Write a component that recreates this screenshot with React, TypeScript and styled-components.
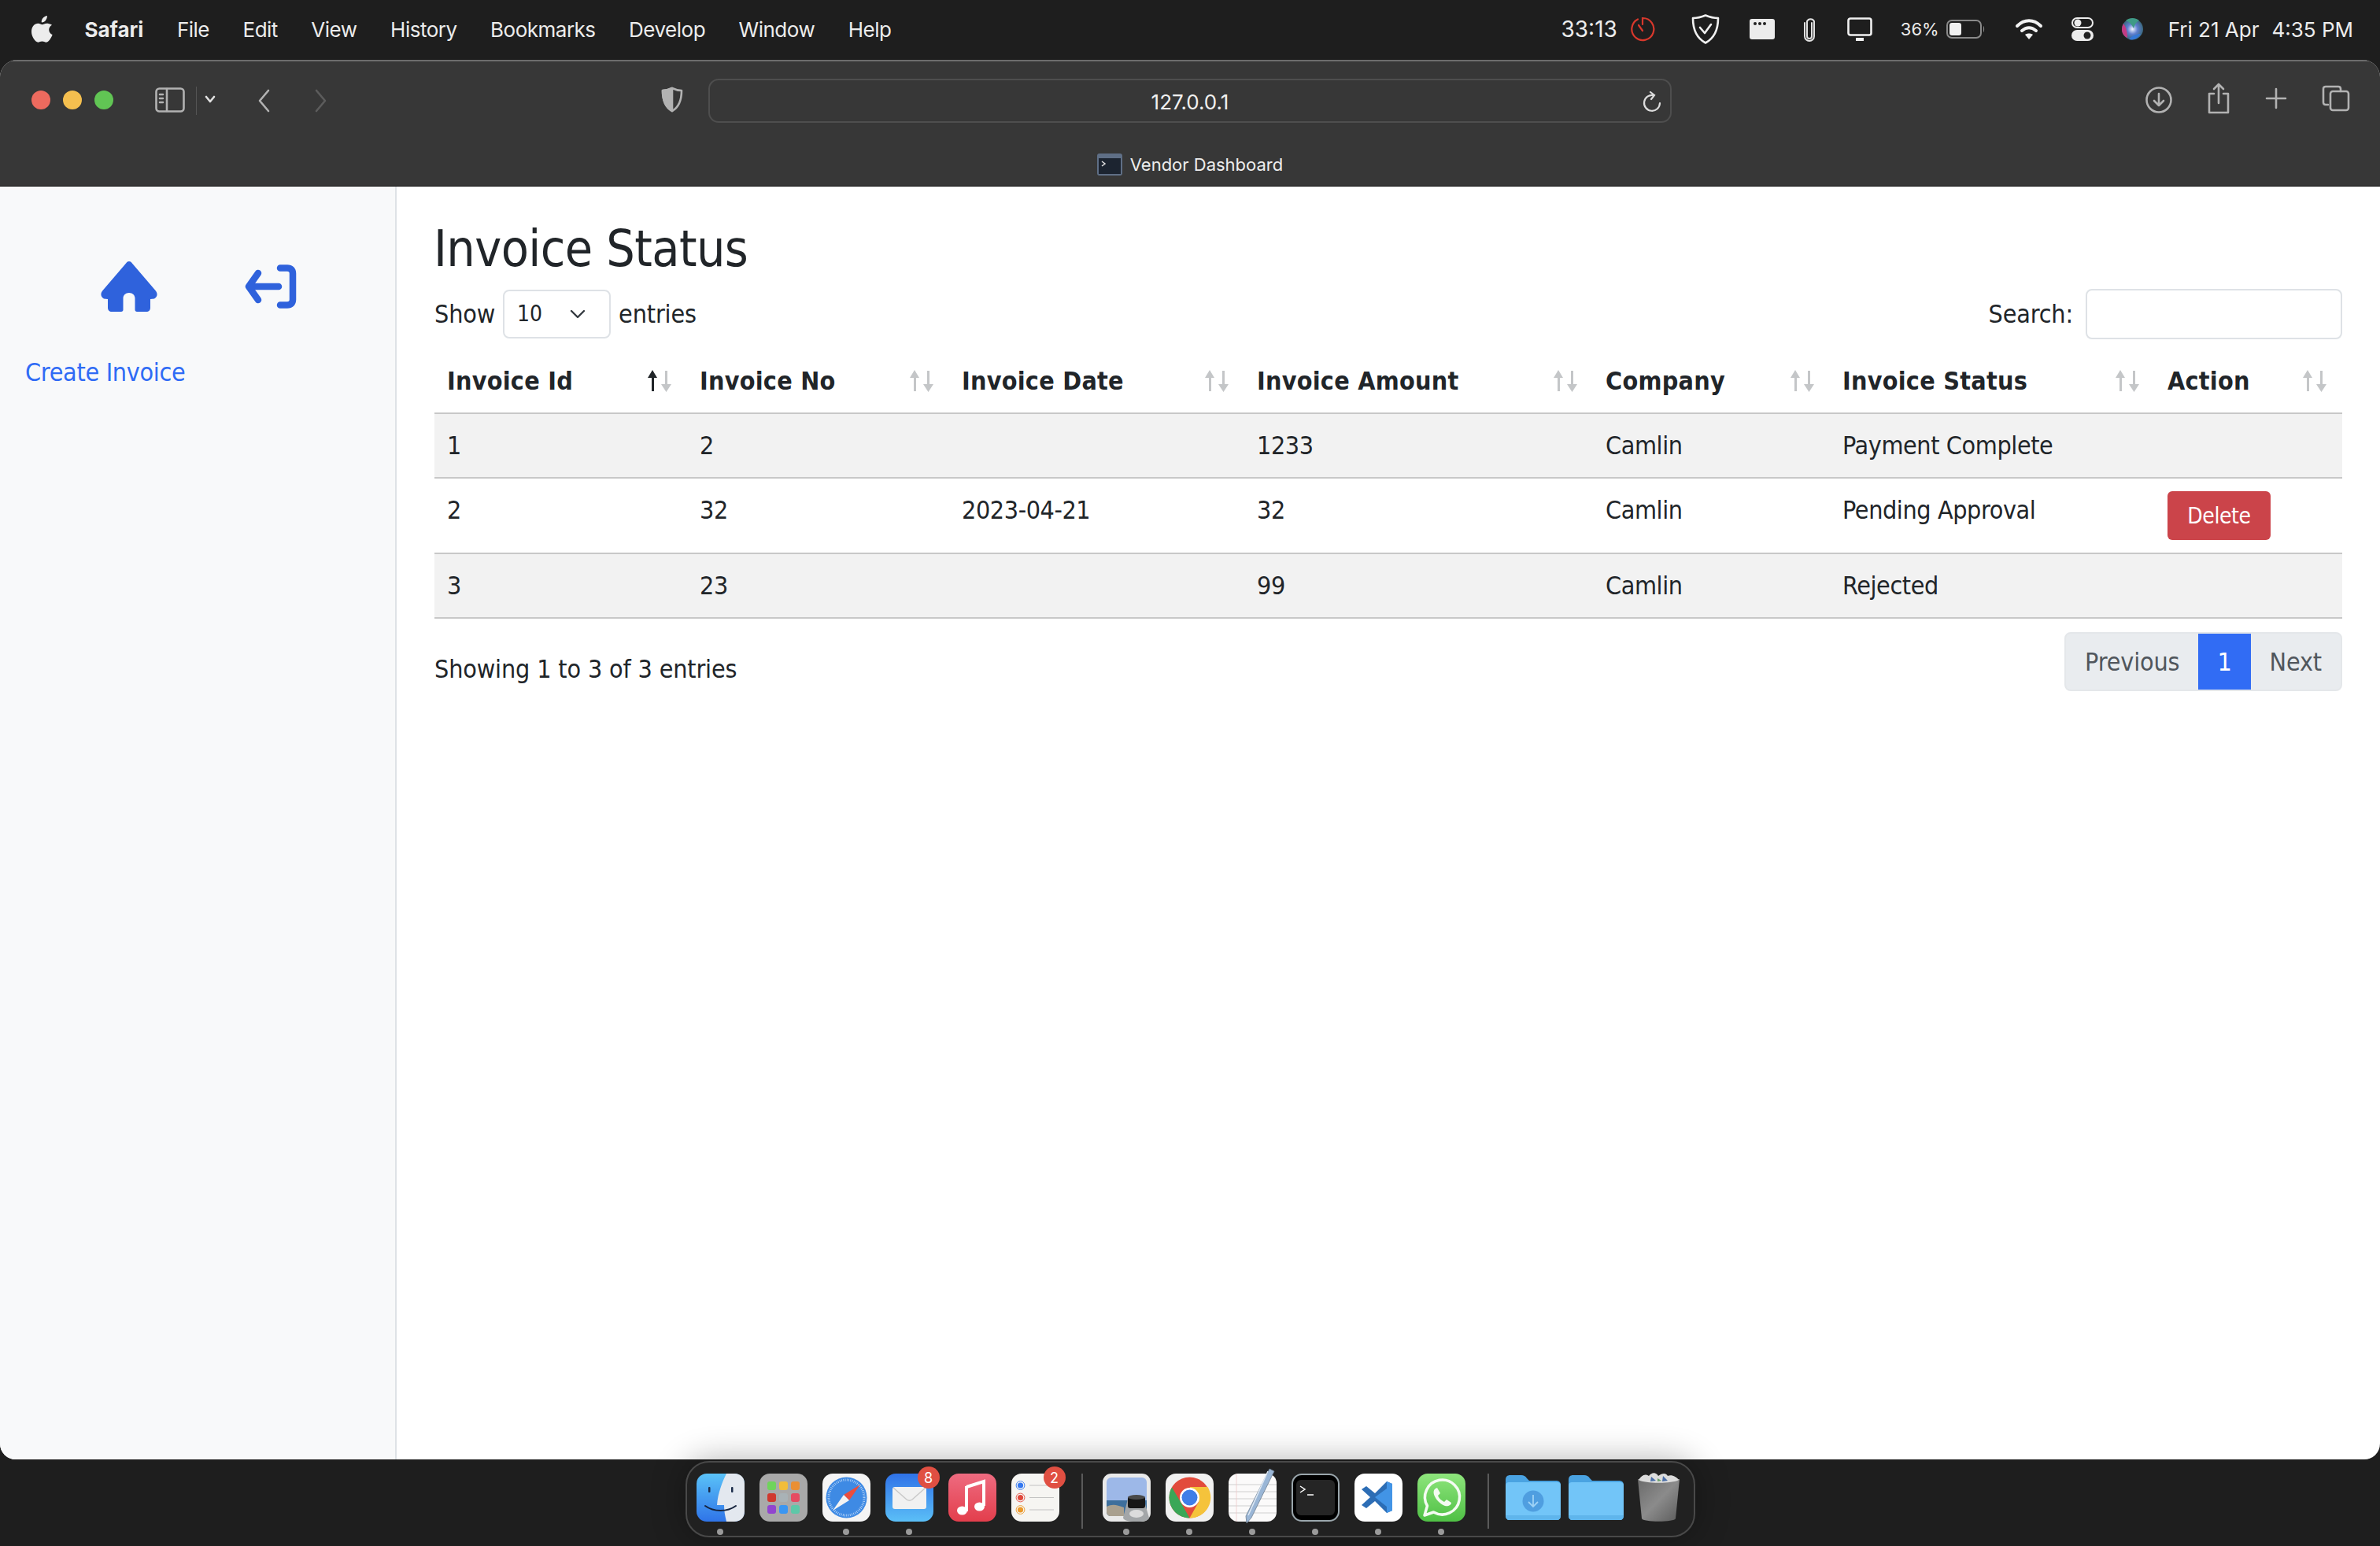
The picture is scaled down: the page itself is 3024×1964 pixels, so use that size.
import { createGlobalStyle, styled } from "styled-components";

const GlobalStyle = createGlobalStyle`
  html, body {
    margin: 0;
    padding: 0;
    background: #1e1e1e;
  }
  * {
    box-sizing: border-box;
  }
`;

const PAGE_FONT = `"DejaVu Sans Condensed", "DejaVu Sans", sans-serif`;
const MAC_FONT = `Inter, "Noto Sans", sans-serif`;

const Screen = styled.div`
  width: 3024px;
  height: 1964px;
  display: flex;
  flex-direction: column;
  background: #1e1e1e;
  overflow: hidden;
`;

const MenuBar = styled.div`
  height: 76px;
  flex: none;
  display: flex;
  align-items: center;
  justify-content: space-between;
  padding: 0 34px 2px 40px;
  color: #ececec;
  font-family: ${MAC_FONT};
  font-size: 26px;
`;

const MenuLeft = styled.div`
  display: flex;
  align-items: center;
  gap: 42.5px;
`;

const AppleLogo = styled.svg`
  width: 28px;
  height: 34px;
  margin-right: -3px;
  fill: #ececec;
`;

const MenuItem = styled.span<{ $bold?: boolean }>`
  font-weight: ${(p) => (p.$bold ? 700 : 400)};
  letter-spacing: ${(p) => (p.$bold ? "0" : "-0.5px")};
  white-space: nowrap;
`;

const Tray = styled.div`
  display: flex;
  align-items: center;
`;

const TrayItem = styled.div<{ $left?: number }>`
  margin-left: ${(p) => p.$left ?? 0}px;
  display: flex;
  align-items: center;
  white-space: nowrap;
`;

const Timer = styled.span`
  font-size: 28px;
`;

const Percent = styled.span`
  font-size: 22px;
`;

const Window = styled.div`
  height: 1778px;
  flex: none;
  display: flex;
  flex-direction: column;
  border-radius: 22px 22px 20px 20px;
  overflow: hidden;
  background: #fff;
`;

const Toolbar = styled.div`
  height: 161px;
  flex: none;
  background: #373737;
  border-top: 2px solid #6c6c6c;
  border-bottom: 1px solid #111;
  display: flex;
  flex-direction: column;
`;

const ToolRow = styled.div`
  height: 100px;
  padding-top: 22px;
  display: flex;
  align-items: flex-start;
`;

const Lights = styled.div`
  display: flex;
  gap: 16px;
  margin: 15px 0 0 40px;
`;

const Light = styled.span<{ $color: string }>`
  width: 24px;
  height: 24px;
  border-radius: 50%;
  background: ${(p) => p.$color};
`;

const ToolIcon = styled.svg<{ $left: number; $top?: number; $dim?: boolean }>`
  margin-left: ${(p) => p.$left}px;
  margin-top: ${(p) => p.$top ?? 12}px;
  flex: none;
  fill: none;
  stroke: ${(p) => (p.$dim ? "#5c5c5c" : "#b2b2b2")};
  stroke-width: 2.6;
  stroke-linecap: round;
  stroke-linejoin: round;
`;

const ToolDivider = styled.span`
  width: 1px;
  height: 36px;
  margin: 10px 0 0 14px;
  flex: none;
  background: #555;
`;

const AddressBar = styled.div`
  width: 1224px;
  height: 56px;
  margin-left: 32px;
  padding-top: 3px;
  flex: none;
  border: 2px solid #4e4e4e;
  border-radius: 13px;
  display: flex;
  align-items: center;
  justify-content: center;
  position: relative;
  color: #f0f0f0;
  font-family: ${MAC_FONT};
  font-size: 26px;
`;

const Reload = styled.svg`
  position: absolute;
  right: 11px;
  top: 14px;
  fill: none;
  stroke: #dcdcdc;
  stroke-width: 2.2;
  stroke-linecap: round;
`;

const TabRow = styled.div`
  flex: 1;
  display: flex;
  align-items: center;
  justify-content: center;
  gap: 10px;
  padding-top: 4px;
  color: #ededed;
  font-family: ${MAC_FONT};
  font-size: 22px;
`;

const Body = styled.div`
  flex: 1;
  display: flex;
  min-height: 0;
`;

const Sidebar = styled.aside`
  width: 504px;
  flex: none;
  background: #f8f9fa;
  border-right: 2px solid #dee2e6;
  padding: 95px 32px 0;
  font-family: ${PAGE_FONT};
`;

const NavIcons = styled.div`
  display: flex;
  align-items: center;
  gap: 111px;
  padding-left: 96px;
  height: 64px;
`;

const CreateLink = styled.a`
  display: block;
  margin-top: 53px;
  color: #2f6bf5;
  font-size: 32px;
  line-height: 48px;
  letter-spacing: -0.3px;
`;

const Main = styled.main`
  flex: 1;
  padding: 41px 48px 0 48px;
  color: #212529;
  font-family: ${PAGE_FONT};
  font-size: 32px;
  line-height: 48px;
  letter-spacing: -0.4px;
`;

const Title = styled.h2`
  margin: 0 0 13px -1px;
  font-size: 64px;
  font-weight: 400;
  line-height: 77px;
  letter-spacing: -0.6px;
`;

const Controls = styled.div`
  display: flex;
  align-items: flex-start;
  justify-content: space-between;
  height: 64px;
`;

const ControlLabel = styled.label`
  display: flex;
  align-items: center;
  gap: 10px;
  height: 62px;
  letter-spacing: -0.15px;
`;

const SelectBox = styled.div`
  width: 137px;
  height: 62px;
  padding: 0 30px 0 16px;
  border: 2px solid #dee2e6;
  border-radius: 8px;
  display: flex;
  align-items: center;
  justify-content: space-between;
  font-size: 28px;
`;

const SearchInput = styled.div`
  width: 326px;
  height: 64px;
  margin-left: 6px;
  border: 2px solid #dee2e6;
  border-radius: 8px;
`;

const Table = styled.table`
  width: 100%;
  margin-top: 12px;
  border-collapse: collapse;
  table-layout: fixed;
`;

const Col = styled.col<{ $w: number }>`
  width: ${(p) => p.$w}px;
`;

const HeadCell = styled.th`
  padding: 16px 20px 16px 16px;
  border-bottom: 2px solid #c8c8c8;
  font-weight: 700;
  text-align: left;
  letter-spacing: 0.25px;
`;

const HeadInner = styled.div`
  display: flex;
  align-items: center;
  justify-content: space-between;
  white-space: nowrap;
`;

const SortIcon = styled.svg`
  flex: none;
`;

const Row = styled.tr<{ $striped?: boolean }>`
  background: ${(p) => (p.$striped ? "#f2f2f2" : "#fff")};
`;

const Cell = styled.td`
  padding: 16px;
  border-bottom: 2px solid #c8c8c8;
  vertical-align: top;
`;

const DeleteButton = styled.button`
  width: 131px;
  height: 62px;
  padding: 0;
  border: 0;
  border-radius: 6px;
  background: #cb444a;
  color: #fff;
  font-family: ${PAGE_FONT};
  font-size: 28px;
  letter-spacing: -0.4px;
  display: block;
`;

const Footer = styled.div`
  display: flex;
  align-items: flex-start;
  justify-content: space-between;
  margin-top: 17px;
`;

const FooterInfo = styled.div`
  padding-top: 23px;
  letter-spacing: -0.15px;
`;

const Pager = styled.div`
  display: flex;
  height: 75px;
  border-radius: 8px;
  overflow: hidden;
  background: #e9ecef;
  border: 2px solid #e4e7ea;
  color: #50565c;
  letter-spacing: -0.15px;
`;

const PageLink = styled.span<{ $active?: boolean }>`
  display: flex;
  align-items: center;
  padding: 0 24px;
  margin: ${(p) => (p.$active ? "-2px 0" : "0")};
  background: ${(p) => (p.$active ? "#316cf4" : "transparent")};
  color: ${(p) => (p.$active ? "#fff" : "inherit")};
`;

const DockRow = styled.div`
  flex: 1;
  display: flex;
  justify-content: center;
  align-items: flex-start;
  padding-top: 2px;
`;

const Dock = styled.div`
  height: 97px;
  padding: 14px 17px 0 12px;
  display: flex;
  align-items: flex-start;
  background: #212121;
  border: 2px solid #494949;
  border-radius: 30px;
  box-shadow: 0 0 44px rgba(0, 0, 0, 0.32);
  position: relative;
`;

const DockGroup = styled.div<{ $gap: number }>`
  display: flex;
  gap: ${(p) => p.$gap}px;
`;

const DockSlot = styled.div<{ $w?: number; $left?: number }>`
  width: ${(p) => p.$w ?? 61}px;
  margin-left: ${(p) => p.$left ?? 0}px;
  display: flex;
  flex-direction: column;
  align-items: center;
  position: relative;
`;

const DockSvg = styled.svg`
  width: 100%;
  height: 61px;
  display: block;
  overflow: visible;
`;

const DockDot = styled.span<{ $on?: boolean }>`
  width: 8px;
  height: 8px;
  margin-top: 9px;
  border-radius: 50%;
  background: ${(p) => (p.$on ? "#9a9a9a" : "transparent")};
`;

const Badge = styled.span`
  position: absolute;
  top: -9px;
  right: -8px;
  width: 28px;
  height: 28px;
  border-radius: 50%;
  background: #e04f42;
  color: #fff;
  font-family: ${MAC_FONT};
  font-size: 18px;
  display: flex;
  align-items: center;
  justify-content: center;
`;

const DockDivider = styled.div<{ $left: number; $right: number }>`
  width: 2px;
  height: 70px;
  margin: 0 ${(p) => p.$right}px 0 ${(p) => p.$left}px;
  background: #5a5a5a;
`;

const columns = [321, 333, 375, 443, 301, 413, 238];
const headers = ["Invoice Id", "Invoice No", "Invoice Date", "Invoice Amount", "Company", "Invoice Status", "Action"];
const rows = [
  { id: "1", no: "2", date: "", amount: "1233", company: "Camlin", status: "Payment Complete" },
  { id: "2", no: "32", date: "2023-04-21", amount: "32", company: "Camlin", status: "Pending Approval", canDelete: true },
  { id: "3", no: "23", date: "", amount: "99", company: "Camlin", status: "Rejected" },
];
const menus = ["File", "Edit", "View", "History", "Bookmarks", "Develop", "Window", "Help"];

function SortArrows({ active }: { active?: boolean }) {
  return (
    <SortIcon width="30" height="28" viewBox="0 0 30 28">
      <path d="M6 0 12 10H8V27H5V10H0Z" fill={active ? "#212529" : "#c4c6c8"} />
      <path d="M22 1h3v17h5L23.500 28 17 18h5Z" fill="#c4c6c8" />
    </SortIcon>
  );
}

function HomeIcon() {
  return (
    <svg width="72" height="64" viewBox="0 0 72 64">
      <path
        d="M36 0c1.500 0 2.700.8 3.700 2.200L69.500 37c3 3.500 3 8-1.500 10.500L63 48v11c0 3-2 5-5 5H46c-1.500 0-2.500-1-2.500-2.500V47c0-4-3-7-7.500-7s-7.500 3-7.500 7v14.500c0 1.500-1 2.500-2.500 2.500H14c-3 0-5-2-5-5V48l-5-.5C-.5 45-.5 40.500 2.500 37L32.300 2.200C33.300.8 34.500 0 36 0Z"
        fill="#2f62dc"
      />
    </svg>
  );
}

function LogoutIcon() {
  return (
    <svg width="66" height="56" viewBox="0 0 66 56" fill="none" stroke="#2f62dc" strokeWidth="8.500" strokeLinecap="round" strokeLinejoin="round">
      <path d="M45 4.500h9c4.500 0 7 2.500 7 7v33c0 4.500-2.500 7-7 7h-9" />
      <path d="M17 11 5 28l12 17" />
      <path d="M6 28h37" />
    </svg>
  );
}

function FinderIcon() {
  return (
    <DockSvg viewBox="0 0 61 61">
      <defs>
        <linearGradient id="finderA" x1="0" y1="0" x2="0" y2="1">
          <stop offset="0" stopColor="#5ac2f8" />
          <stop offset="1" stopColor="#2f74e8" />
        </linearGradient>
      </defs>
      <rect width="61" height="61" rx="13" fill="url(#finderA)" />
      <path d="M38 0h10c8 0 13 5 13 13v35c0 8-5 13-13 13H38c-2-8-3-14-3-21H26C27 25 33 10 38 0Z" fill="#e3e8ef" />
      <rect x="15" y="17" width="2.500" height="7" rx="1" fill="#1b2c4a" />
      <rect x="44" y="17" width="2.500" height="7" rx="1" fill="#1b2c4a" />
      <path d="M11 41c11 8 28 8 39 0" fill="none" stroke="#15233d" strokeWidth="2" strokeLinecap="round" />
    </DockSvg>
  );
}

function LaunchpadIcon() {
  const colors = ["#6fd45b", "#f2bd3a", "#ea8f34", "#d0382e", "#a9b2b6", "#e54b62", "#9145cf", "#3a96f2", "#5ec7a8"];
  return (
    <DockSvg viewBox="0 0 61 61">
      <rect width="61" height="61" rx="13" fill="#a9a9a9" />
      {colors.map((c, i) => (
        <rect key={c} x={10 + (i % 3) * 15} y={10 + Math.floor(i / 3) * 15} width="11" height="11" rx="3" fill={c} />
      ))}
    </DockSvg>
  );
}

function SafariIcon() {
  return (
    <DockSvg viewBox="0 0 61 61">
      <rect width="61" height="61" rx="13" fill="#f4f4f4" />
      <circle cx="30.500" cy="30.500" r="26" fill="#3e8ae4" />
      <circle cx="30.500" cy="30.500" r="22.500" fill="none" stroke="#cfe3fa" strokeWidth="3" strokeDasharray="0.7 1.600" />
      <path d="M48 14 27 27l7 7Z" fill="#ea4d3e" />
      <path d="M13 47 34 34l-7-7Z" fill="#f3f3f3" />
    </DockSvg>
  );
}

function MailIcon() {
  return (
    <DockSvg viewBox="0 0 61 61">
      <defs>
        <linearGradient id="mailA" x1="0" y1="0" x2="0" y2="1">
          <stop offset="0" stopColor="#2f72e8" />
          <stop offset="1" stopColor="#5bbff7" />
        </linearGradient>
      </defs>
      <rect width="61" height="61" rx="13" fill="url(#mailA)" />
      <rect x="9" y="17" width="43" height="28" rx="3" fill="#f1f1f1" />
      <path d="M10 18 27 33c2 1.500 5 1.500 7 0L51 18" fill="none" stroke="#c9c9c9" strokeWidth="1.500" />
    </DockSvg>
  );
}

function MusicIcon() {
  return (
    <DockSvg viewBox="0 0 61 61">
      <defs>
        <linearGradient id="musicA" x1="0" y1="0" x2="0" y2="1">
          <stop offset="0" stopColor="#ee6b80" />
          <stop offset="1" stopColor="#e33e4c" />
        </linearGradient>
      </defs>
      <rect width="61" height="61" rx="13" fill="url(#musicA)" />
      <path d="M23 17 45 10v31" fill="none" stroke="#fff" strokeWidth="4" />
      <path d="M23 16v32" stroke="#fff" strokeWidth="4" />
      <ellipse cx="17.500" cy="47" rx="6.500" ry="5.500" fill="#fff" />
      <ellipse cx="39.500" cy="42" rx="6.500" ry="5.500" fill="#fff" />
    </DockSvg>
  );
}

function RemindersIcon() {
  const dots = ["#3478f0", "#e0483c", "#ec9a2c"];
  return (
    <DockSvg viewBox="0 0 61 61">
      <rect width="61" height="61" rx="13" fill="#f6f5f2" />
      {dots.map((c, i) => (
        <g key={c}>
          <circle cx="11.500" cy={15 + i * 15.500} r="3.600" fill={c} />
          <circle cx="11.500" cy={15 + i * 15.500} r="5.400" fill="none" stroke={c} strokeWidth="0.900" />
          <path d={`M23 ${15 + i * 15.500}h31`} stroke="#c2c2c2" strokeWidth="1" />
        </g>
      ))}
    </DockSvg>
  );
}

function ScriptIcon() {
  return (
    <DockSvg viewBox="0 0 61 61">
      <rect width="61" height="61" rx="11" fill="#e9e9e9" />
      <rect x="5" y="5" width="51" height="49" rx="6" fill="#9db8e8" />
      <path d="M5 34h51v14c0 4-2 6-6 6H11c-4 0-6-2-6-6Z" fill="#3e6f9c" />
      <path d="M5 42c8-4 13-2 22 1v11H11c-4 0-6-2-6-6Z" fill="#a9a08f" />
      <path d="M32 32h20l7 24c0 3-5 5-16 5s-17-2-17-5Z" fill="#a3a6a8" />
      <rect x="32" y="29" width="22" height="15" rx="3" fill="#161616" />
      <ellipse cx="43" cy="30" rx="11" ry="3" fill="#4a4a4a" />
      <ellipse cx="43" cy="51" rx="9" ry="5" fill="#dcdcdc" />
    </DockSvg>
  );
}

function ChromeIcon() {
  return (
    <DockSvg viewBox="0 0 61 61">
      <rect width="61" height="61" rx="13" fill="#f1f1f1" />
      <circle cx="30.500" cy="30.500" r="26" fill="#e24b3c" />
      <path d="M8 17.500 19 36l11.500 20.500A26 26 0 0 1 8 17.500Z" fill="#3aa757" />
      <path d="M30.500 17h23a26 26 0 0 1-23 39.500L42 36Z" fill="#f5c33b" />
      <circle cx="30.500" cy="30.500" r="12.500" fill="#fff" />
      <circle cx="30.500" cy="30.500" r="10" fill="#3f7ee8" />
    </DockSvg>
  );
}

function NotesIcon() {
  return (
    <DockSvg viewBox="0 0 61 61">
      <rect width="61" height="61" rx="12" fill="#fbfafa" />
      {[14, 23, 32, 41, 50].map((y) => (
        <path key={y} d={`M0 ${y}H61`} stroke="#cfcfcf" strokeWidth="1" />
      ))}
      <path d="M10 0V61" stroke="#f0c8c8" strokeWidth="0.800" />
      <path d="M52-6 58-3 29 56l-6 7-1-9Z" fill="#9ab6d6" stroke="#6e7f92" strokeWidth="0.800" />
      <path d="M50-3 25 53" stroke="#dfe9f4" strokeWidth="1.500" />
    </DockSvg>
  );
}

function TerminalIcon() {
  return (
    <DockSvg viewBox="0 0 61 61">
      <rect x="1" y="1" width="59" height="59" rx="12" fill="#000" stroke="#9aa6ac" strokeWidth="2" />
      <rect x="6" y="8" width="49" height="45" rx="6" fill="#252525" />
      <path d="M11 16l6 4-6 4" fill="none" stroke="#fff" strokeWidth="1.500" />
      <path d="M20 27h8" stroke="#fff" strokeWidth="1.500" />
    </DockSvg>
  );
}

function VsCodeIcon() {
  return (
    <DockSvg viewBox="0 0 61 61">
      <rect width="61" height="61" rx="13" fill="#fff" />
      <path d="M41 10 48 13V47L41 50 26 35 15 44 9 40 20 30 9 20 15 16 26 25Z" fill="#2c6db5" />
      <path d="M41 10 48 13V47L41 50V19L26 30 41 42Z" fill="#4294e6" />
    </DockSvg>
  );
}

function WhatsAppIcon() {
  return (
    <DockSvg viewBox="0 0 61 61">
      <defs>
        <linearGradient id="waA" x1="0" y1="0" x2="0" y2="1">
          <stop offset="0" stopColor="#8ee57c" />
          <stop offset="1" stopColor="#4fc045" />
        </linearGradient>
      </defs>
      <rect width="61" height="61" rx="13" fill="url(#waA)" />
      <path d="M9 53l3.500-12a22 22 0 1 1 8 8Z" fill="none" stroke="#f4fbf2" strokeWidth="3.500" strokeLinejoin="round" />
      <path d="M23 19c-3 2-3 6-1 10 3 6 8 10 13 12 4 1 8-1 8-4l-6-4-3 3c-4-2-7-5-8-8l3-3-4-7Z" fill="#f4fbf2" />
    </DockSvg>
  );
}

function FolderIcon({ download }: { download?: boolean }) {
  return (
    <DockSvg viewBox="0 0 70 61">
      <path d="M0 8c0-4 2-6 6-6h14c3 0 5 1 7 4l3 3h34c4 0 6 2 6 6v5H0Z" fill="#4aa3e2" />
      <path d="M0 15c0-3 2-4 4-4h62c2 0 4 1 4 4v38c0 4-2 6-5 6H5c-3 0-5-2-5-6Z" fill="#72c5f8" />
      <path d="M0 53h70c0 4-2 6-5 6H5c-3 0-5-2-5-6Z" fill="#5fb5ec" />
      {download && (
        <g>
          <ellipse cx="35" cy="35" rx="13.500" ry="13.500" fill="#4f9ee0" />
          <path d="M35 27v15m-6-6 6 6 6-6" fill="none" stroke="#9ed2f6" strokeWidth="1.800" />
        </g>
      )}
    </DockSvg>
  );
}

function TrashIcon() {
  return (
    <DockSvg viewBox="0 0 55 61">
      <defs>
        <linearGradient id="trashA" x1="0" y1="0" x2="1" y2="1">
          <stop offset="0" stopColor="#6a6a6a" />
          <stop offset="0.500" stopColor="#8b8b8b" />
          <stop offset="1" stopColor="#5c5c5c" />
        </linearGradient>
      </defs>
      <path d="M1 7h53l-5 50c-1 5-42 5-43 0Z" fill="url(#trashA)" />
      <path d="M2 8C6 2 10 0 15 3c4-5 9-5 12 0 5-4 10-4 12 0 5-2 11 1 14 5-8 5-43 5-51 0Z" fill="#dcdcdc" />
      <path d="M18 4l6 5-7 1ZM33 3l6 6-7 1Z" fill="#4a6ea8" />
      <path d="M26 6l5 3-5 1Z" fill="#6aa06a" />
    </DockSvg>
  );
}

export default function App() {
  return (
    <>
      <GlobalStyle />
      <Screen>
        <MenuBar>
          <MenuLeft>
            <AppleLogo viewBox="0 0 24 29">
              <path d="M17 0c.2 2-.6 3.700-1.600 5-1.100 1.300-2.700 2.300-4.500 2.100-.2-1.900.7-3.700 1.700-4.800C13.700 1.100 15.500.2 17 0Zm5.300 10c-2.800 1.700-3.300 4-3.200 5.500.1 3 2.700 4.600 3.700 5-1 3-3.900 8.300-6.900 8.300-1.500 0-2.500-1-4.300-1-1.900 0-2.900 1-4.400 1C4.200 28.800 0 22.700 0 17.300 0 11.700 3.500 8.300 7.200 8.300c1.800 0 3.400 1.200 4.500 1.200 1.100 0 2.900-1.300 5-1.300 1 0 3.700.3 5.600 1.800Z" />
            </AppleLogo>
            <MenuItem $bold>Safari</MenuItem>
            {menus.map((m) => (
              <MenuItem key={m}>{m}</MenuItem>
            ))}
          </MenuLeft>
          <Tray>
            <TrayItem><Timer>33:13</Timer></TrayItem>
            <TrayItem $left={16}>
              <svg width="32" height="34" viewBox="0 0 32 34" fill="none" stroke="#d8382c" strokeWidth="2.200" strokeLinecap="round">
                <path d="M10 4.500A14 14 0 1 0 16 3v8" />
                <path d="M11 12l5 7" />
              </svg>
            </TrayItem>
            <TrayItem $left={46}>
              <svg width="36" height="38" viewBox="0 0 36 38" fill="none" stroke="#f0f0f0" strokeWidth="2.600" strokeLinejoin="round">
                <path d="M18 1.500C24 4 29 5 34 5c0 13-4 25-16 31.500C6 30 2 18 2 5c5 0 10-1 16-3.500Z" />
                <path d="M11 17l6 7 8-11" strokeLinecap="round" />
              </svg>
            </TrayItem>
            <TrayItem $left={38}>
              <svg width="32" height="26" viewBox="0 0 32 26">
                <rect width="32" height="26" rx="3" fill="#ececec" />
                <circle cx="7" cy="6" r="2" fill="#222" />
                <circle cx="13" cy="6" r="2" fill="#222" />
                <circle cx="19" cy="6" r="2" fill="#222" />
              </svg>
            </TrayItem>
            <TrayItem $left={37}>
              <svg width="14" height="34" viewBox="0 0 14 34" fill="none" stroke="#e2e2e2" strokeWidth="2" strokeLinecap="round">
                <path d="M10 9v17a3 3 0 0 1-6 0V7a5 5 0 0 1 9 0v19a6 6 0 0 1-12 0V9" />
              </svg>
            </TrayItem>
            <TrayItem $left={41}>
              <svg width="32" height="30" viewBox="0 0 32 30" fill="none">
                <rect x="1.500" y="1.500" width="29" height="21" rx="2.500" stroke="#f0f0f0" strokeWidth="2.600" />
                <path d="M11 26h10v4H11Z" fill="#f0f0f0" />
              </svg>
            </TrayItem>
            <TrayItem $left={36}>
              <Percent>36%</Percent>
            </TrayItem>
            <TrayItem $left={9}>
              <svg width="49" height="24" viewBox="0 0 49 24" fill="none">
                <rect x="1" y="1" width="43" height="22" rx="6" stroke="#8a8a8a" strokeWidth="2" />
                <rect x="4" y="4" width="15" height="16" rx="3" fill="#f0f0f0" />
                <path d="M47 8c1.500 1 1.500 7 0 8Z" fill="#8a8a8a" />
              </svg>
            </TrayItem>
            <TrayItem $left={38}>
              <svg width="36" height="28" viewBox="0 0 36 28" fill="none" stroke="#f2f2f2" strokeWidth="4" strokeLinecap="round">
                <path d="M3 10c9-9 21-9 30 0" />
                <path d="M9 16c6-5 12-5 18 0" />
                <path d="M18 27l-5-6c3-2 7-2 10 0Z" fill="#f2f2f2" stroke="none" />
              </svg>
            </TrayItem>
            <TrayItem $left={36}>
              <svg width="28" height="30" viewBox="0 0 28 30" fill="none">
                <rect x="1" y="1" width="26" height="12" rx="6" stroke="#ececec" strokeWidth="2" />
                <circle cx="8" cy="7" r="4.500" fill="#ececec" />
                <rect y="16" width="28" height="14" rx="7" fill="#ececec" />
                <circle cx="20" cy="23" r="4.500" fill="#222" />
              </svg>
            </TrayItem>
            <TrayItem $left={36}>
              <svg width="27" height="28" viewBox="0 0 27 28">
                <defs>
                  <radialGradient id="siriA" cx="0.500" cy="0.500" r="0.600">
                    <stop offset="0" stopColor="#f0f4ff" />
                    <stop offset="0.400" stopColor="#5f7fd0" />
                    <stop offset="1" stopColor="#2c5e5c" />
                  </radialGradient>
                </defs>
                <circle cx="13.500" cy="14" r="13.500" fill="url(#siriA)" />
                <path d="M5 3c5-4 12-4 17 0-4 2-6 6-7 10-2-4-5-8-10-10Z" fill="#3f9a86" />
                <path d="M2 7c-4 7-2 15 5 18 0-6-1-13-5-18Z" fill="#c33b83" />
                <path d="M9 27c7 2 13-3 15-7-5 0-11 2-15 7Z" fill="#3478d8" />
              </svg>
            </TrayItem>
            <TrayItem $left={32}>Fri 21 Apr</TrayItem>
            <TrayItem $left={16}>4:35 PM</TrayItem>
          </Tray>
        </MenuBar>

        <Window>
          <Toolbar>
            <ToolRow>
              <Lights>
                <Light $color="#ed6a5e" />
                <Light $color="#f5bf4f" />
                <Light $color="#61c554" />
              </Lights>
              <ToolIcon $left={53} $top={11} width="38" height="32" viewBox="0 0 38 32">
                <rect x="1.500" y="1.500" width="35" height="29" rx="4" />
                <path d="M15 2v28M6 9h4M6 14h4M6 19h4" />
              </ToolIcon>
              <ToolDivider />
              <ToolIcon $left={10} $top={21} width="14" height="10" viewBox="0 0 14 10">
                <path d="M2 2l5 6 5-6" stroke="#e0e0e0" />
              </ToolIcon>
              <ToolIcon $left={53} $top={13} width="17" height="30" viewBox="0 0 17 30">
                <path d="M14 2 3 15l11 13" />
              </ToolIcon>
              <ToolIcon $left={55} $top={13} width="17" height="30" viewBox="0 0 17 30" $dim>
                <path d="M3 2l11 13L3 28" />
              </ToolIcon>
              <ToolIcon $left={424} $top={10} width="28" height="33" viewBox="0 0 28 33">
                <path d="M14 2c4 2 8 3 12 3 0 12-3 21-12 26C5 26 2 17 2 5c4 0 8-1 12-3Z" />
                <path d="M14 2C10 4 6 5 2 5c0 12 3 21 12 26Z" fill="#b2b2b2" />
              </ToolIcon>
              <AddressBar>
                127.0.0.1
                <Reload width="24" height="28" viewBox="0 0 24 28">
                  <path d="M14 5a10 10 0 1 0 8 10" />
                  <path d="M10 1l5 4-4 5" />
                </Reload>
              </AddressBar>
              <ToolIcon $left={602} $top={10} width="34" height="34" viewBox="0 0 34 34">
                <circle cx="17" cy="17" r="15.500" />
                <path d="M17 9v15m-6-6 6 6 6-6" />
              </ToolIcon>
              <ToolIcon $left={44} $top={5} width="30" height="40" viewBox="0 0 30 40">
                <path d="M9 14H3v24h24V14h-6M15 26V2M9 8l6-6 6 6" />
              </ToolIcon>
              <ToolIcon $left={44} $top={11} width="28" height="28" viewBox="0 0 28 28">
                <path d="M14 2v24M2 14h24" />
              </ToolIcon>
              <ToolIcon $left={44} $top={8} width="36" height="34" viewBox="0 0 36 34">
                <path d="M8 25H5c-2 0-3-1-3-3V5c0-2 1-3 3-3h16c2 0 3 1 3 3v3" />
                <rect x="11" y="8" width="23" height="24" rx="3" />
              </ToolIcon>
            </ToolRow>
            <TabRow>
              <svg width="32" height="28" viewBox="0 0 32 28">
                <rect width="32" height="28" rx="3" fill="#5f6f86" />
                <rect x="2" y="6" width="28" height="20" fill="#1c2430" />
                <path d="M6 10l4 3-4 3" fill="none" stroke="#e0e0e0" strokeWidth="1.500" />
              </svg>
              Vendor Dashboard
            </TabRow>
          </Toolbar>

          <Body>
            <Sidebar>
              <NavIcons>
                <HomeIcon />
                <LogoutIcon />
              </NavIcons>
              <CreateLink>Create Invoice</CreateLink>
            </Sidebar>
            <Main>
              <Title>Invoice Status</Title>
              <Controls>
                <ControlLabel>
                  Show
                  <SelectBox>
                    10
                    <svg width="20" height="13" viewBox="0 0 20 13" fill="none" stroke="#343a40" strokeWidth="2.400" strokeLinecap="round" strokeLinejoin="round">
                      <path d="M2 2l8 8 8-8" />
                    </svg>
                  </SelectBox>
                  entries
                </ControlLabel>
                <ControlLabel>
                  Search:
                  <SearchInput />
                </ControlLabel>
              </Controls>
              <Table>
                <colgroup>
                  {columns.map((w, i) => (
                    <Col key={i} $w={w} />
                  ))}
                </colgroup>
                <thead>
                  <tr>
                    {headers.map((h, i) => (
                      <HeadCell key={h}>
                        <HeadInner>
                          {h}
                          <SortArrows active={i === 0} />
                        </HeadInner>
                      </HeadCell>
                    ))}
                  </tr>
                </thead>
                <tbody>
                  {rows.map((r, i) => (
                    <Row key={r.id} $striped={i % 2 === 0}>
                      <Cell>{r.id}</Cell>
                      <Cell>{r.no}</Cell>
                      <Cell>{r.date}</Cell>
                      <Cell>{r.amount}</Cell>
                      <Cell>{r.company}</Cell>
                      <Cell>{r.status}</Cell>
                      <Cell>{r.canDelete && <DeleteButton>Delete</DeleteButton>}</Cell>
                    </Row>
                  ))}
                </tbody>
              </Table>
              <Footer>
                <FooterInfo>Showing 1 to 3 of 3 entries</FooterInfo>
                <Pager>
                  <PageLink>Previous</PageLink>
                  <PageLink $active>1</PageLink>
                  <PageLink>Next</PageLink>
                </Pager>
              </Footer>
            </Main>
          </Body>
        </Window>

        <DockRow>
          <Dock>
            <DockGroup $gap={19}>
              <DockSlot><FinderIcon /><DockDot $on /></DockSlot>
              <DockSlot><LaunchpadIcon /><DockDot /></DockSlot>
              <DockSlot><SafariIcon /><DockDot $on /></DockSlot>
              <DockSlot><MailIcon /><Badge>8</Badge><DockDot $on /></DockSlot>
              <DockSlot><MusicIcon /><DockDot /></DockSlot>
              <DockSlot><RemindersIcon /><Badge>2</Badge><DockDot /></DockSlot>
            </DockGroup>
            <DockDivider $left={28} $right={25} />
            <DockGroup $gap={19}>
              <DockSlot><ScriptIcon /><DockDot $on /></DockSlot>
              <DockSlot><ChromeIcon /><DockDot $on /></DockSlot>
              <DockSlot><NotesIcon /><DockDot $on /></DockSlot>
              <DockSlot><TerminalIcon /><DockDot $on /></DockSlot>
              <DockSlot><VsCodeIcon /><DockDot $on /></DockSlot>
              <DockSlot><WhatsAppIcon /><DockDot $on /></DockSlot>
            </DockGroup>
            <DockDivider $left={28} $right={21} />
            <DockGroup $gap={10}>
              <DockSlot $w={70}><FolderIcon download /><DockDot /></DockSlot>
              <DockSlot $w={70}><FolderIcon /><DockDot /></DockSlot>
              <DockSlot $w={55} $left={7}><TrashIcon /><DockDot /></DockSlot>
            </DockGroup>
          </Dock>
        </DockRow>
      </Screen>
    </>
  );
}
